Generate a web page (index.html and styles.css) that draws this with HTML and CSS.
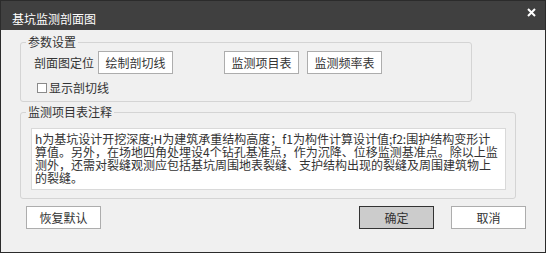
FILE: index.html
```html
<!DOCTYPE html>
<html lang="zh-CN">
<head>
    <meta charset="UTF-8">
    <meta name="viewport" content="width=device-width, initial-scale=1.0">
    <title>基坑监测剖面图</title>
    <link rel="stylesheet" href="styles.css">
</head>
<body>
    <div class="window">
        <div class="titlebar">
            <span class="title">基坑监测剖面图</span>
            <svg class="close" width="9" height="9" viewBox="0 0 9 9">
                <path d="M1 1 L8 8 M8 1 L1 8" stroke="#fff" stroke-width="2" fill="none"/>
            </svg>
        </div>
        <div class="content">
            <fieldset class="group params">
                <legend>参数设置</legend>
                <div class="row">
                    <span class="label">剖面图定位</span>
                    <button class="btn draw">绘制剖切线</button>
                    <button class="btn items">监测项目表</button>
                    <button class="btn freq">监测频率表</button>
                </div>
                <label class="check">
                    <span class="box"></span>
                    <span>显示剖切线</span>
                </label>
            </fieldset>
            <fieldset class="group notes">
                <legend>监测项目表注释</legend>
                <div class="memo">h为基坑设计开挖深度;H为建筑承重结构高度；f1为构件计算设计值;f2:围护结构变形计<br>算值。另外，在场地四角处埋设4个钻孔基准点，作为沉降、位移监测基准点。除以上监<br>测外，还需对裂缝观测应包括基坑周围地表裂缝、支护结构出现的裂缝及周围建筑物上<br>的裂缝。</div>
            </fieldset>
            <div class="actions">
                <button class="btn">恢复默认</button>
                <span class="spacer"></span>
                <button class="btn primary">确定</button>
                <button class="btn">取消</button>
            </div>
        </div>
    </div>
</body>
</html>
```

FILE: styles.css
```css
* {
    box-sizing: border-box;
}
body {
    margin: 0;
    font-family: "Noto Sans CJK SC", "Noto Sans", sans-serif;
    font-size: 12px;
    color: #333;
    background: #f0f0f0;
}
.window {
    width: 546px;
    height: 253px;
    border: 1px solid #2b2b2b;
    background: #f0f0f0;
    overflow: hidden;
}
.titlebar {
    height: 29px;
    background: #404040;
    color: #fff;
    display: flex;
    justify-content: space-between;
    align-items: flex-start;
    padding: 0 9px 0 11px;
}
.title {
    margin-top: 12px;
    line-height: 12px;
}
.close {
    margin-top: 7px;
}
.content {
    padding: 0 19px 0 19px;
}
.group {
    margin: 6px 0 0 0;
    padding: 3px 12px 7px 13px;
    border: 1px solid #d4d4d4;
    border-radius: 3px;
    min-width: 0;
}
.group legend {
    padding: 0 2px;
    margin-left: -8px;
    line-height: 12px;
    font-size: 12px;
}
.params {
    width: 452px;
}
.notes {
    width: 496px;
    margin-top: 4px;
    padding: 10px 9px 8px 10px;
}
.notes legend {
    margin-left: -5px;
}
.row {
    display: flex;
    align-items: center;
}
.label {
    flex: none;
    width: 60px;
    margin-right: 4px;
    line-height: 12px;
    white-space: nowrap;
}
.btn {
    flex: none;
    width: 75px;
    height: 23px;
    padding: 0;
    border: 1px solid #adadad;
    background: #fff;
    color: #333;
    font-family: inherit;
    font-size: 12px;
    line-height: 12px;
    border-radius: 0;
}
.items {
    margin-left: 51px;
}
.freq {
    margin-left: 8px;
}
.check {
    display: flex;
    align-items: center;
    margin-top: 8px;
    margin-left: 3px;
    line-height: 12px;
}
.box {
    width: 10px;
    height: 10px;
    border: 1px solid #8a8a8a;
    background: #fff;
    margin-right: 2px;
}
.memo {
    height: 62px;
    border: 1px solid #d9d9d9;
    background: #fff;
    padding: 3px 3px;
    line-height: 13px;
    white-space: nowrap;
    overflow: hidden;
}
.actions {
    display: flex;
    margin-top: 7px;
    padding: 0 0 0 6px;
}
.spacer {
    flex: 1;
}
.primary {
    background: #cccccc;
    border-color: #333;
    margin-right: 17px;
}
```
